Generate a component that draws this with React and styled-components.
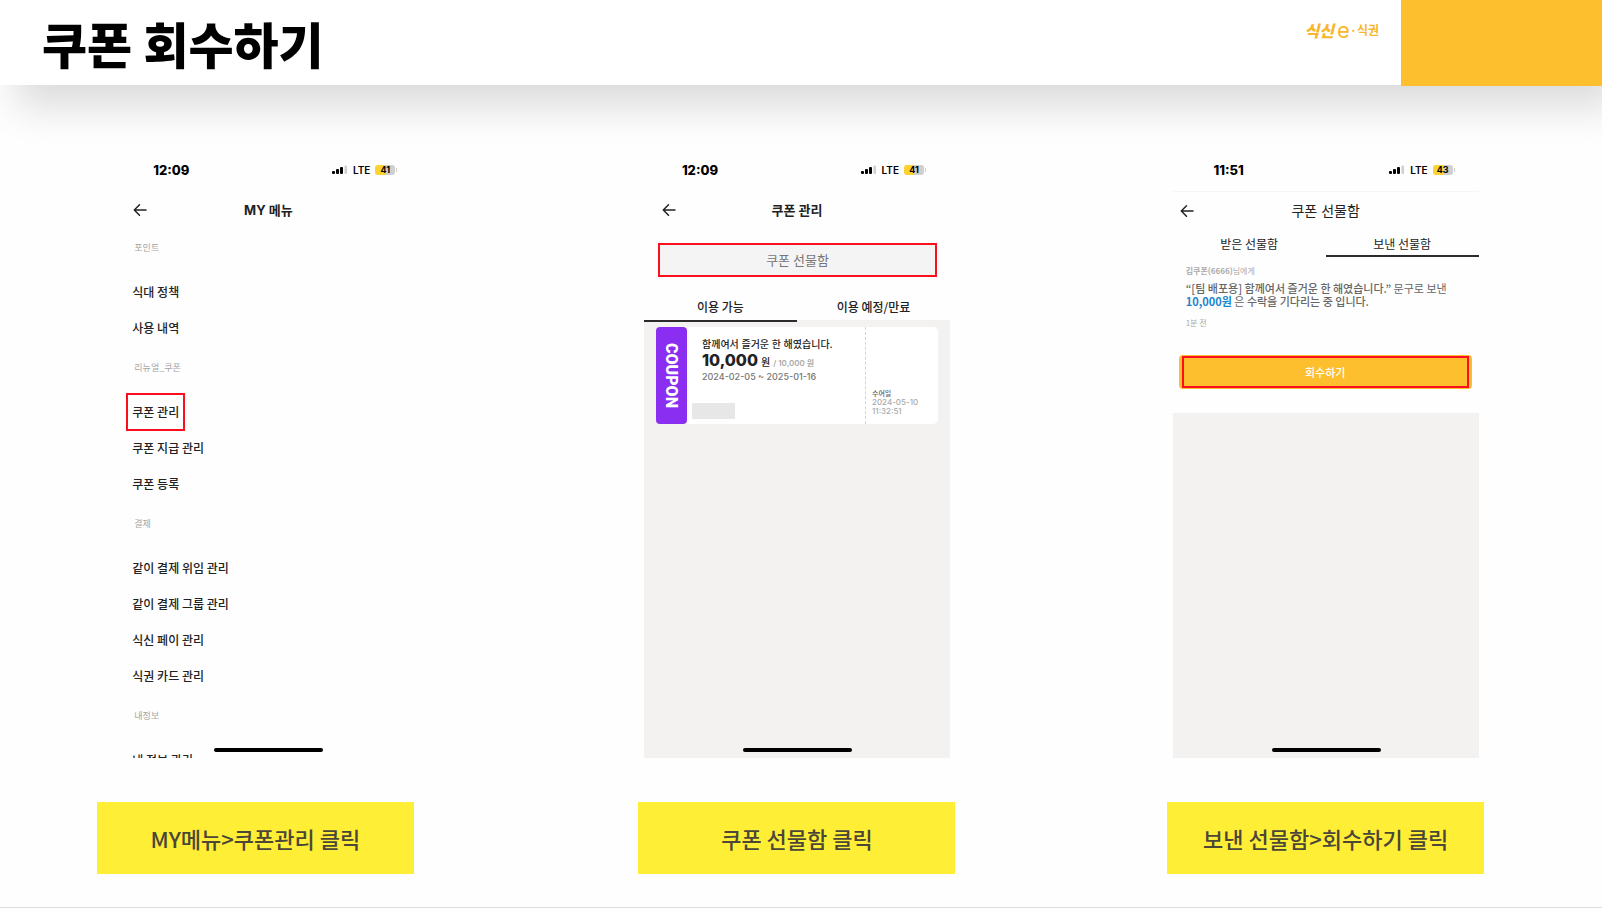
import React from 'react';
import styled, { createGlobalStyle, css } from 'styled-components';

const kr = `"Noto Sans CJK KR", "Noto Sans", sans-serif`;
const latin = `Inter, "Noto Sans CJK KR", sans-serif`;
const red = '#fb0f1c';
const amber = '#fdbf2d';
const mist = '#f3f2f1';

const GlobalStyle = createGlobalStyle`
  *, *::before, *::after { box-sizing: border-box; }
  body { margin: 0; background: #fefefe; color: #222; font-family: ${kr}; }
  button { margin: 0; padding: 0; border: 0; background: none; color: inherit; font: inherit; cursor: pointer; }
  h1, h2, p { margin: 0; }
`;

const Page = styled.div`
  min-height: 100vh;
  display: flex;
  flex-direction: column;
  border-bottom: 1px solid #dcdcdc;
`;

const Header = styled.header`
  display: flex;
  align-items: flex-start;
  height: 85px;
  padding-left: 42px;
  background: #fff;
  box-shadow: 16px 22px 40px rgba(0, 0, 0, 0.14);
`;

const Title = styled.h1`
  flex: 1;
  font-size: 49px;
  line-height: 86px;
  font-weight: 900;
  color: #000;
`;

const Logo = styled.a`
  display: flex;
  align-items: center;
  margin: 20px 22px 0 0;
  height: 20px;
  color: #f9b52b;
  text-decoration: none;
  line-height: 20px;
`;

const LogoMark = styled.span`
  font-size: 16px;
  font-weight: 900;
  font-style: italic;
`;

const LogoLetter = styled.span`
  margin-left: 3px;
  font-family: ${latin};
  font-size: 22px;
  font-weight: 400;
`;

const LogoWord = styled.span`
  font-size: 12px;
  font-weight: 700;
`;

const Corner = styled.div`
  width: 201px;
  height: 86px;
  background: ${amber};
`;

const Steps = styled.main`
  display: grid;
  grid-template-columns: repeat(3, 1fr);
  padding: 66px 12px 33px 4px;
`;

const Step = styled.section`
  display: flex;
  flex-direction: column;
  align-items: center;
`;

const Phone = styled.div`
  position: relative;
  display: flex;
  flex-direction: column;
  width: 100%;
  max-width: 306px;
  height: 607px;
  overflow: hidden;
`;

const HomeBar = styled.div`
  position: absolute;
  left: 50%;
  bottom: 6px;
  width: 109px;
  height: 4px;
  margin-left: -54px;
  border-radius: 2px;
  background: #000;
`;

const Caption = styled.h2`
  width: 317px;
  height: 72px;
  margin: 44px ${(p) => p.$inset || 0}px 0 0;
  background: #feee35;
  color: #4b4638;
  font-size: 22px;
  line-height: 72px;
  font-weight: 500;
  text-align: center;
`;

const StatusRow = styled.div`
  display: flex;
  align-items: center;
  flex: none;
  height: 40px;
  padding: 0 24px 2px 36px;
  color: #000;
  font-family: ${latin};
`;

const Clock = styled.span`
  width: 40px;
  margin-right: auto;
  font-size: 13px;
  font-weight: 800;
  text-align: center;
`;

const Carrier = styled.span`
  margin: 0 5px;
  font-size: 10px;
  font-weight: 600;
`;

const Battery = styled.span`
  width: 20px;
  height: 10px;
  margin-right: 1px;
  border-radius: 3px;
  background: linear-gradient(90deg, #fbd22f 0 50%, #cfcfcf 50%);
  font-size: 9px;
  line-height: 10px;
  font-weight: 700;
  text-align: center;
`;

const AppBar = styled.div`
  display: grid;
  grid-template-columns: 20px 1fr 20px;
  align-items: center;
  flex: none;
  height: 38px;
  padding: 0 ${(p) => (p.$ruled ? 7 : 18)}px;
  border-top: ${(p) => (p.$ruled ? '1px solid #f6f6f6' : '0')};
  font-family: ${latin};
`;

const BackButton = styled.button`
  display: flex;
  width: 14px;
  height: 14px;
`;

const AppTitle = styled.h2`
  font-size: ${(p) => (p.$light ? 14 : 13)}px;
  line-height: 20px;
  font-weight: ${(p) => (p.$light ? 400 : 700)};
  text-align: center;
`;

const Menu = styled.nav`
  display: flex;
  flex-direction: column;
  align-items: flex-start;
  padding-left: 12px;
`;

const Category = styled.p`
  padding: 0 7px 7px;
  color: #a6a6a6;
  font-size: 9px;
  line-height: 38px;
  &:not(:first-child) { margin-top: 3px; }
`;

const MenuItem = styled.button`
  height: 36px;
  padding: 0 5px;
  font-size: 12px;
  line-height: 36px;
  font-weight: 500;
  white-space: nowrap;
  ${(p) => p.$marked && css`
    outline: 2px solid ${red};
    outline-offset: -1px;
  `}
`;

const GiftBoxButton = styled.button`
  flex: none;
  height: 34px;
  margin: 14px 13px 17px 14px;
  border: 2px solid ${red};
  background: #f4f4f4;
  color: #777;
  font-size: 13px;
  line-height: 28px;
`;

const Tabs = styled.div`
  display: grid;
  grid-template-columns: 1fr 1fr;
  flex: none;
  padding-top: ${(p) => (p.$compact ? 5 : 0)}px;
`;

const Tab = styled.button`
  padding-bottom: ${(p) => (p.$compact ? 1 : 0)}px;
  border-bottom: 2px solid ${(p) => (p['aria-selected'] ? '#2b2b2e' : p.$line || 'transparent')};
  font-size: 12px;
  line-height: ${(p) => (p.$compact ? 20 : 26)}px;
  font-weight: ${(p) => (p.$compact ? 400 : 500)};
`;

const GreyArea = styled.div`
  flex: 1;
  padding: 5px 12px;
  background: ${mist};
`;

const CouponCard = styled.article`
  display: flex;
  height: 97px;
  border-radius: 5px;
  background: #fff;
`;

const CouponTag = styled.div`
  width: 31px;
  border-radius: 4px;
  background: #8a2ff2;
  color: #fff;
  font-family: Roboto, sans-serif;
  font-size: 16px;
  line-height: 31px;
  font-weight: 900;
  text-align: center;
  writing-mode: vertical-rl;
`;

const CouponBody = styled.div`
  flex: 1;
  padding: 9px 0 0 15px;
  white-space: nowrap;
  font-family: ${latin};
`;

const CouponName = styled.p`
  font-size: 10px;
  line-height: 16px;
  font-weight: 500;
`;

const Amount = styled.p`
  display: flex;
  align-items: baseline;
  gap: 3px;
  height: 16px;
  font-size: 16px;
  line-height: 16px;
  font-weight: 800;
`;

const Unit = styled.span`
  font-size: 10px;
  font-weight: 500;
`;

const Total = styled.span`
  color: #aaa;
  font-size: 8px;
  font-weight: 600;
`;

const Period = styled.p`
  padding-top: 1px;
  color: #777;
  font-size: 9px;
  line-height: 16px;
  font-weight: 500;
`;

const Redacted = styled.div`
  width: 43px;
  height: 16px;
  margin: 18px 0 0 -10px;
  background: #e7e7e7;
`;

const CouponStub = styled.div`
  display: flex;
  flex-direction: column;
  justify-content: flex-end;
  width: 73px;
  padding: 0 0 8px 6px;
  border-left: 1px dashed #d4d4d4;
  color: #aaa;
  font-family: ${latin};
  font-size: 8px;
  line-height: 9px;
  font-weight: 500;
`;

const StubLabel = styled.span`
  color: #666;
  font-size: 7px;
`;

const Gift = styled.article`
  height: 98px;
  padding: 7px 0 0 13px;
  white-space: nowrap;
  color: #666;
  font-size: 11px;
  line-height: 13px;
`;

const Meta = styled.p`
  color: #aaa;
  font-size: 8px;
  line-height: 13px;
`;

const Message = styled.p`
  padding: 5px 0 8px;
  b { font-weight: 500; }
`;

const Blue = styled.strong`
  color: #1b86cf;
  font-weight: 700;
`;

const RecallButton = styled.button`
  flex: none;
  height: 34px;
  margin: 0 7px 24px 6px;
  padding: 1px 3px;
  border-radius: 4px;
  background: ${amber};
  color: #fff;
`;

const RecallLabel = styled.span`
  display: block;
  height: 32px;
  border: 2px solid ${red};
  font-size: 11px;
  line-height: 28px;
  font-weight: 500;
`;

function SignalIcon() {
  return (
    <svg width="16" height="10" viewBox="0 0 16 10" aria-hidden="true">
      <rect x="0" y="6" width="3" height="3" rx="1" />
      <rect x="4" y="4" width="3" height="5" rx="1" />
      <rect x="8" y="2" width="3" height="7" rx="1" />
      <rect x="12.5" y="0.5" width="2.5" height="8.5" rx="1" fill="#cfcfcf" />
    </svg>
  );
}

function BatteryTip() {
  return (
    <svg width="1" height="4" viewBox="0 0 1 4" aria-hidden="true">
      <rect width="1" height="4" fill="#cfcfcf" />
    </svg>
  );
}

function Status({ time, level }) {
  return (
    <StatusRow>
      <Clock>{time}</Clock>
      <SignalIcon />
      <Carrier>LTE</Carrier>
      <Battery>{level}</Battery>
      <BatteryTip />
    </StatusRow>
  );
}

function TopBar({ title, ruled }) {
  return (
    <AppBar $ruled={ruled}>
      <BackButton aria-label="뒤로">
        <svg width="14" height="14" viewBox="0 0 14 14" fill="none" stroke="#222" strokeWidth="1.5" strokeLinecap="round" strokeLinejoin="round">
          <path d="M13 7H1.5M6.5 1.8L1.3 7l5.2 5.2" />
        </svg>
      </BackButton>
      <AppTitle $light={ruled}>{title}</AppTitle>
    </AppBar>
  );
}

const menu = [
  ['포인트', ['식대 정책', '사용 내역']],
  ['리뉴얼_쿠폰', ['쿠폰 관리', '쿠폰 지급 관리', '쿠폰 등록']],
  ['결제', ['같이 결제 위임 관리', '같이 결제 그룹 관리', '식신 페이 관리', '식권 카드 관리']],
  ['내정보', ['내 정보 관리']],
];

export default function App() {
  return (
    <Page>
      <GlobalStyle />
      <Header>
        <Title>쿠폰 회수하기</Title>
        <Logo href="#">
          <LogoMark>식신</LogoMark>
          <LogoLetter>e</LogoLetter>
          <LogoWord>·식권</LogoWord>
        </Logo>
        <Corner />
      </Header>

      <Steps>
        <Step>
          <Phone>
            <Status time="12:09" level="41" />
            <TopBar title="MY 메뉴" />
            <Menu>
              {menu.map(([name, items]) => (
                <React.Fragment key={name}>
                  <Category>{name}</Category>
                  {items.map((item) => (
                    <MenuItem key={item} $marked={item === '쿠폰 관리'}>{item}</MenuItem>
                  ))}
                </React.Fragment>
              ))}
            </Menu>
            <HomeBar />
          </Phone>
          <Caption $inset={26}>MY메뉴&gt;쿠폰관리 클릭</Caption>
        </Step>

        <Step>
          <Phone>
            <Status time="12:09" level="41" />
            <TopBar title="쿠폰 관리" />
            <GiftBoxButton>쿠폰 선물함</GiftBoxButton>
            <Tabs role="tablist">
              <Tab role="tab" aria-selected={true}>이용 가능</Tab>
              <Tab role="tab" aria-selected={false} $line={mist}>이용 예정/만료</Tab>
            </Tabs>
            <GreyArea>
              <CouponCard>
                <CouponTag>COUPON</CouponTag>
                <CouponBody>
                  <CouponName>함께여서 즐거운 한 해였습니다.</CouponName>
                  <Amount>
                    10,000 <Unit>원</Unit> <Total>/ 10,000 원</Total>
                  </Amount>
                  <Period>2024-02-05 ~ 2025-01-16</Period>
                  <Redacted />
                </CouponBody>
                <CouponStub>
                  <StubLabel>수여일</StubLabel>
                  <span>2024-05-10</span>
                  <span>11:32:51</span>
                </CouponStub>
              </CouponCard>
            </GreyArea>
            <HomeBar />
          </Phone>
          <Caption>쿠폰 선물함 클릭</Caption>
        </Step>

        <Step>
          <Phone>
            <Status time="11:51" level="43" />
            <TopBar title="쿠폰 선물함" ruled />
            <Tabs role="tablist" $compact>
              <Tab role="tab" aria-selected={false} $compact>받은 선물함</Tab>
              <Tab role="tab" aria-selected={true} $compact>보낸 선물함</Tab>
            </Tabs>
            <Gift>
              <Meta><b>김쿠폰(6666)</b>님에게</Meta>
              <Message>
                <b>“[팀 배포용] 함께여서 즐거운 한 해였습니다.”</b> 문구로 보낸<br />
                <Blue>10,000원</Blue> 은 <b>수락을 기다리는 중 입니다.</b>
              </Message>
              <Meta>1분 전</Meta>
            </Gift>
            <RecallButton>
              <RecallLabel>회수하기</RecallLabel>
            </RecallButton>
            <GreyArea />
            <HomeBar />
          </Phone>
          <Caption>보낸 선물함&gt;회수하기 클릭</Caption>
        </Step>
      </Steps>
    </Page>
  );
}
